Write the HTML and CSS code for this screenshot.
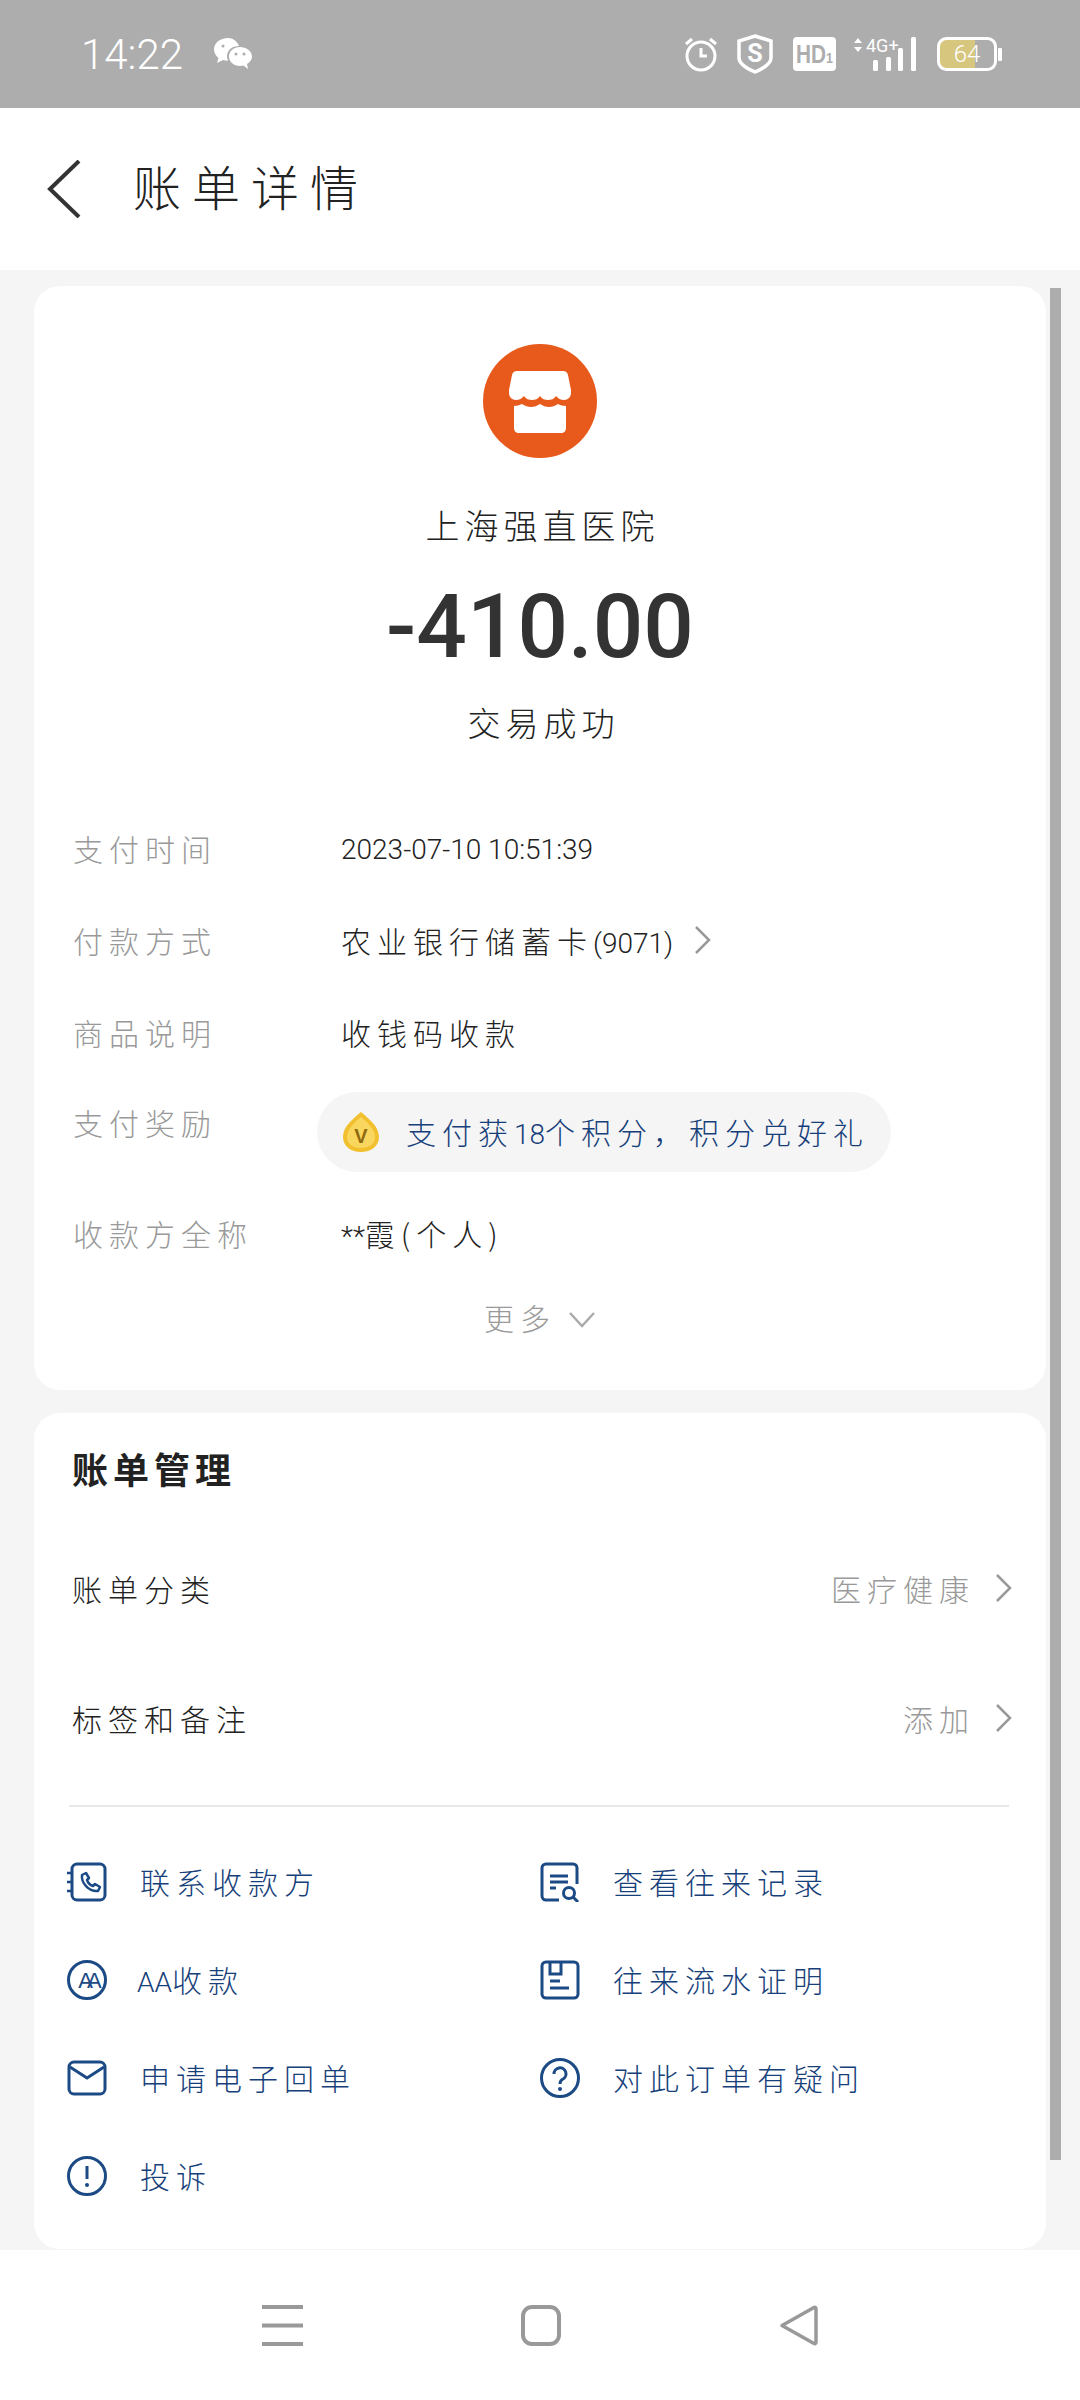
FILE: index.html
```html
<!DOCTYPE html>
<html lang="zh-CN">
<head>
  <meta charset="UTF-8">
  <title>账单详情</title>
  <link rel="stylesheet" href="styles.css">
</head>
<body>

  <!-- 状态栏 -->
  <div class="status-bar">
    <span class="time">14:22</span>
    <svg class="ic-wechat" viewBox="0 0 38 32">
      <path d="M14 0C6 0 0 5 0 11.500c0 3.500 2 6.500 4.500 8.500L3 25l6-3c1.500.5 3 .7 5 .7-.5-1.500-1-3-1-4.200 0-6.500 5.500-10.500 12-10.500C23 3 19 0 14 0z" fill="#fff"/>
      <path d="M26 9c-6 0-11 4-11 9.500S20 28 26 28c1.300 0 2.500-.2 3.500-.5L34 31l-1-5c3-1.800 5-4.500 5-7.500C38 13 32 9 26 9z" fill="#fff"/>
      <circle cx="22" cy="16" r="1.500" fill="#adadad"/><circle cx="30" cy="16" r="1.500" fill="#adadad"/>
      <circle cx="9" cy="8" r="1.500" fill="#adadad"/>
    </svg>
    <div class="status-icons">
      <svg class="ic-alarm" viewBox="0 0 32 36">
        <circle cx="16" cy="20" r="14" fill="none" stroke="#fff" stroke-width="3"/>
        <path d="M16 12v8h6" fill="none" stroke="#fff" stroke-width="3"/>
        <path d="M1 8l6-5M31 8l-6-5" fill="none" stroke="#fff" stroke-width="3"/>
      </svg>
      <svg class="ic-shield" viewBox="0 0 36 40">
        <path d="M18 2l16 5v17c0 6-9 11-16 14C11 35 2 30 2 24V7z" fill="none" stroke="#fff" stroke-width="3.500"/>
        <text x="18" y="28" class="svg-s">S</text>
      </svg>
      <svg class="ic-hd" viewBox="0 0 43 34">
        <rect width="43" height="34" rx="4" fill="#fff"/>
        <text x="3" y="26" class="svg-hd" textLength="37" lengthAdjust="spacingAndGlyphs">HD<tspan class="svg-hd-sub">1</tspan></text>
      </svg>
      <svg class="ic-net" viewBox="0 -4 63 42">
        <path d="M5 1l4 5H1zM5 15l4-5H1z" fill="#fff"/>
        <text x="13" y="15" class="svg-4g">4G+</text>
        <rect x="20" y="23" width="5" height="11" rx="1.500" fill="#fff"/>
        <rect x="33" y="20" width="5" height="14" rx="1.500" fill="#fff"/>
        <rect x="45" y="11" width="5" height="23" rx="1.500" fill="#fff"/>
        <rect x="58" y="0" width="5" height="34" rx="1.500" fill="#fff"/>
      </svg>
      <svg class="ic-battery" viewBox="0 0 65 34">
        <rect x="3" y="3" width="35" height="28" fill="#d6c67e"/>
        <rect x="1.500" y="1.500" width="57" height="31" rx="8" fill="none" stroke="#fff" stroke-width="3"/>
        <rect x="61" y="11" width="4" height="13" rx="1" fill="#fff"/>
        <text x="30" y="25" class="svg-batt">64</text>
      </svg>
    </div>
  </div>

  <!-- 标题 -->
  <div class="top-bar">
    <svg class="ic-back" viewBox="0 0 34 58"><path d="M32 1L3 29l29 28" fill="none" stroke="#333" stroke-width="4"/></svg>
    <span class="page-title">账单详情</span>
  </div>

  <div class="content">
    <div class="scroll-thumb"></div>

    <!-- 账单信息 -->
    <div class="card info-card">
      <svg class="shop-logo" viewBox="0 0 114 114">
        <circle cx="57" cy="57" r="57" fill="#e8591c"/>
        <path d="M34 27h46c3 0 4 1 5 4l3 15v3c0 4-3 7-7 7-3 0-5-1-8-4-2 3-5 4-8 4s-6-1-8-4c-2 3-5 4-8 4s-6-1-8-4c-3 3-5 4-8 4-4 0-7-3-7-7v-3l3-15c1-3 2-4 5-4z" fill="#fff"/>
        <path d="M31 62c3 0 5-1 8-2 3 2 6 3 9 3s6-1 9-3c3 2 6 3 9 3s6-1 9-3c2 1 5 2 8 2v22c0 3-2 5-5 5H36c-3 0-5-2-5-5z" fill="#fff"/>
      </svg>
      <div class="shop-name">上海强直医院</div>
      <div class="amount">-410.00</div>
      <div class="pay-status">交易成功</div>

      <div class="info-row first">
        <span class="label">支付时间</span>
        <span class="value num">2023-07-10 10:51:39</span>
      </div>
      <div class="info-row">
        <span class="label">付款方式</span>
        <span class="value">农业银行储蓄卡<span class="tight">(9071)</span></span>
        <svg class="chev-sm" viewBox="0 0 18 30"><path d="M2 2l13 13L2 28" fill="none" stroke="#999" stroke-width="2.500"/></svg>
      </div>
      <div class="info-row">
        <span class="label">商品说明</span>
        <span class="value">收钱码收款</span>
      </div>
      <div class="info-row reward-row">
        <span class="label">支付奖励</span>
        <div class="reward-pill">
          <svg class="coin" viewBox="0 0 36 40">
            <path d="M18 0C25 6 36 14 36 25c0 9-8 15-18 15S0 34 0 25C0 14 11 6 18 0z" fill="#f2c02e"/>
            <path d="M18 5C24 10 32 17 32 25c0 7-6 11-14 11S4 32 4 25C4 17 12 10 18 5z" fill="#f9d75e"/>
            <text x="18" y="31" class="svg-v">V</text>
          </svg>
          <span class="reward-text">支付获<span class="tight">18</span>个积分，积分兑好礼</span>
        </div>
      </div>
      <div class="info-row payee-row">
        <span class="label">收款方全称</span>
        <span class="value"><span class="tight">**</span>霞(个人)</span>
      </div>
      <div class="more">
        <span>更多</span>
        <svg class="chev-down" viewBox="0 0 28 18"><path d="M2 2l12 13L26 2" fill="none" stroke="#aaa" stroke-width="2.500"/></svg>
      </div>
    </div>

    <!-- 账单管理 -->
    <div class="card manage-card">
      <div class="card-title">账单管理</div>
      <div class="manage-row">
        <span class="manage-name">账单分类</span>
        <span class="manage-value">医疗健康</span>
        <svg class="chev" viewBox="0 0 18 30"><path d="M2 2l13 13L2 28" fill="none" stroke="#999" stroke-width="2.500"/></svg>
      </div>
      <div class="manage-row">
        <span class="manage-name">标签和备注</span>
        <span class="manage-value">添加</span>
        <svg class="chev" viewBox="0 0 18 30"><path d="M2 2l13 13L2 28" fill="none" stroke="#999" stroke-width="2.500"/></svg>
      </div>
      <div class="divider"></div>

      <div class="actions">
        <div class="action">
          <svg class="action-icon" viewBox="0 0 40 40">
            <rect x="5" y="2" width="33" height="36" rx="5" fill="none" stroke="#1c4a85" stroke-width="3"/>
            <path d="M0 11h5M0 20h5M0 29h5" stroke="#1c4a85" stroke-width="2.500"/>
            <path d="M15 13l4-2 3 5-2 2c1 3 3 5 6 6l2-2 5 3-2 4c-9 1-17-8-16-16z" fill="none" stroke="#1c4a85" stroke-width="2.500" stroke-linejoin="round"/>
          </svg>
          <span>联系收款方</span>
        </div>
        <div class="action">
          <svg class="action-icon" viewBox="0 0 40 40">
            <path d="M37 22V6a4 4 0 0 0-4-4H6a4 4 0 0 0-4 4v28a4 4 0 0 0 4 4h13" fill="none" stroke="#1c4a85" stroke-width="3"/>
            <path d="M10 14h18M10 20h18M10 26h6" stroke="#1c4a85" stroke-width="3"/>
            <circle cx="29" cy="31" r="5.500" fill="none" stroke="#1c4a85" stroke-width="3"/>
            <path d="M33 35l5 5" stroke="#1c4a85" stroke-width="3"/>
          </svg>
          <span>查看往来记录</span>
        </div>
        <div class="action">
          <svg class="action-icon" viewBox="0 0 40 40">
            <circle cx="20" cy="20" r="18.500" fill="none" stroke="#1c4a85" stroke-width="3"/>
            <text x="20" y="28" class="svg-aa">AA</text>
          </svg>
          <span class="aa-text"><span class="tight">AA</span>收款</span>
        </div>
        <div class="action">
          <svg class="action-icon" viewBox="0 0 40 40">
            <rect x="2" y="2" width="36" height="36" rx="4" fill="none" stroke="#1c4a85" stroke-width="3"/>
            <path d="M10 2v12h11V2" fill="none" stroke="#1c4a85" stroke-width="3"/>
            <path d="M10 21h10M10 28h19" stroke="#1c4a85" stroke-width="3"/>
          </svg>
          <span>往来流水证明</span>
        </div>
        <div class="action">
          <svg class="action-icon mail" viewBox="0 0 40 36">
            <rect x="2" y="2" width="36" height="32" rx="5" fill="none" stroke="#1c4a85" stroke-width="3"/>
            <path d="M3 7l17 11L37 7" fill="none" stroke="#1c4a85" stroke-width="3"/>
          </svg>
          <span>申请电子回单</span>
        </div>
        <div class="action">
          <svg class="action-icon" viewBox="0 0 40 40">
            <circle cx="20" cy="20" r="18.500" fill="none" stroke="#1c4a85" stroke-width="3"/>
            <path d="M14 16a6 6 0 1 1 9 5c-2 1-3 2-3 5" fill="none" stroke="#1c4a85" stroke-width="3"/>
            <circle cx="20" cy="31" r="2" fill="#1c4a85"/>
          </svg>
          <span>对此订单有疑问</span>
        </div>
        <div class="action">
          <svg class="action-icon" viewBox="0 0 40 40">
            <circle cx="20" cy="20" r="18.500" fill="none" stroke="#1c4a85" stroke-width="3"/>
            <path d="M20 10v13" stroke="#1c4a85" stroke-width="3"/>
            <circle cx="20" cy="29" r="2" fill="#1c4a85"/>
          </svg>
          <span>投诉</span>
        </div>
      </div>
    </div>
  </div>

  <!-- 底部导航 -->
  <div class="nav-bar">
    <svg class="nav-menu" viewBox="0 0 41 41"><path d="M0 2h41M0 20.500h41M0 39h41" stroke="#999" stroke-width="4"/></svg>
    <svg class="nav-home" viewBox="0 0 40 41"><rect x="2" y="2" width="36" height="37" rx="9" fill="none" stroke="#999" stroke-width="4"/></svg>
    <svg class="nav-back" viewBox="0 0 39 41"><path d="M3 20.500L35 2.500c1-.5 2 0 2 1.500v33c0 1.500-1 2-2 1.500z" fill="none" stroke="#999" stroke-width="3.500" stroke-linejoin="round"/></svg>
  </div>

</body>
</html>
```

FILE: styles.css
```css
* {
  box-sizing: border-box;
}

body {
  margin: 0;
  width: 1080px;
  height: 2400px;
  overflow: hidden;
  background-color: #f5f5f5;
  color: #222;
  font-family: "Noto Sans CJK SC", "Noto Sans", sans-serif;
  font-weight: 300;
  font-size: 30px;
  letter-spacing: 6px;
}

svg {
  display: block;
  flex-shrink: 0;
}

/* 状态栏 */
.status-bar {
  height: 108px;
  background-color: #adadad;
  display: flex;
  align-items: center;
  padding: 0 78px 0 81px;
}

.time {
  font-family: Roboto, sans-serif;
  font-weight: 300;
  font-size: 42px;
  letter-spacing: 0;
  color: #fff;
}

.ic-wechat {
  width: 38px;
  height: 32px;
  margin-left: 31px;
}

.status-icons {
  margin-left: auto;
  display: flex;
  align-items: center;
  gap: 20px;
}

.ic-alarm { width: 32px; height: 36px; }
.ic-shield { width: 36px; height: 40px; }
.ic-hd { width: 43px; height: 34px; }
.ic-net { width: 63px; height: 42px; margin-left: -3px; }
.ic-battery { width: 65px; height: 34px; margin-left: 1px; }

.svg-s {
  font: 700 25px Roboto, sans-serif;
  fill: #fff;
  text-anchor: middle;
  letter-spacing: 0;
}

.svg-hd {
  font: 700 25px "Liberation Sans", sans-serif;
  fill: #adadad;
  letter-spacing: 0;
}

.svg-hd-sub {
  font-size: 15px;
}

.svg-4g {
  font: 400 18px Roboto, sans-serif;
  fill: #fff;
  letter-spacing: 0;
}

.svg-batt {
  font: 300 24px Roboto, sans-serif;
  fill: #fff;
  text-anchor: middle;
  letter-spacing: 0;
}

.svg-v {
  font: 700 20px "Liberation Sans", sans-serif;
  fill: #8f6a10;
  text-anchor: middle;
  letter-spacing: 0;
}

.svg-aa {
  font: 400 22px "Liberation Sans", sans-serif;
  fill: #1c4a85;
  text-anchor: middle;
  letter-spacing: -6px;
}

/* 标题 */
.top-bar {
  height: 162px;
  background-color: #fff;
  display: flex;
  align-items: center;
  padding-left: 47px;
}

.ic-back {
  width: 34px;
  height: 58px;
}

.page-title {
  margin-left: 52px;
  margin-bottom: 8px;
  font-size: 48px;
  letter-spacing: 11px;
}

/* 内容 */
.content {
  position: relative;
  height: 1980px;
  padding: 16px 34px 0;
}

.scroll-thumb {
  position: absolute;
  top: 18px;
  right: 19px;
  width: 11px;
  height: 1872px;
  background-color: #adadad;
}

.card {
  background-color: #fff;
  border-radius: 26px;
}

.info-card {
  height: 1104px;
  padding: 58px 38px 0;
  display: flex;
  flex-direction: column;
}

.shop-logo {
  width: 114px;
  height: 114px;
  align-self: center;
}

.shop-name {
  margin-top: 37px;
  padding-left: 5px;
  line-height: 60px;
  font-size: 34px;
  letter-spacing: 5px;
  text-align: center;
}

.amount {
  margin-top: 22px;
  line-height: 100px;
  font-family: Roboto, sans-serif;
  font-weight: 500;
  font-size: 89px;
  letter-spacing: 0;
  color: #333;
  text-align: center;
}

.pay-status {
  margin-top: 20px;
  padding-left: 7px;
  line-height: 50px;
  font-size: 33px;
  letter-spacing: 5px;
  text-align: center;
}

.info-row {
  display: flex;
  align-items: center;
  height: 92px;
  padding-bottom: 3px;
}

.info-row.first {
  margin-top: 56px;
}

.label {
  width: 269px;
  flex-shrink: 0;
  padding-left: 1px;
  color: #999;
}

.value.num {
  margin-top: 3px;
  font-family: Roboto, sans-serif;
  font-weight: 300;
  font-size: 28px;
  letter-spacing: 0;
}

.tight {
  font-family: Roboto, sans-serif;
  font-size: 28px;
  letter-spacing: 0;
}

.chev-sm {
  width: 18px;
  height: 30px;
  margin-left: 21px;
}

.reward-row {
  height: 80px;
  margin-top: 13px;
  padding-bottom: 0;
  align-items: flex-start;
}

.reward-row .label {
  width: 245px;
  line-height: 60px;
}

.reward-pill {
  height: 80px;
  width: 574px;
  border-radius: 40px;
  background-color: #f5f5f5;
  display: flex;
  align-items: center;
  padding-left: 26px;
  color: #173f7a;
}

.coin {
  width: 36px;
  height: 40px;
}

.reward-text {
  margin-left: 27px;
  margin-bottom: 3px;
  white-space: nowrap;
}

.payee-row {
  margin-top: 16px;
}

.more {
  margin-top: 12px;
  height: 50px;
  display: flex;
  align-items: center;
  justify-content: center;
  color: #999;
  gap: 12px;
}

.chev-down {
  width: 28px;
  height: 18px;
  margin-top: 6px;
}

/* 账单管理 */
.manage-card {
  height: 836px;
  margin-top: 23px;
  padding: 25px 33px 0 33px;
}

.card-title {
  line-height: 60px;
  padding-left: 5px;
  font-size: 36px;
  font-weight: 700;
  letter-spacing: 5px;
}

.manage-row {
  height: 130px;
  display: flex;
  align-items: center;
  padding-left: 5px;
  padding-bottom: 3px;
}

.card-title + .manage-row {
  margin-top: 26px;
}

.manage-value {
  margin-left: auto;
  color: #999;
}

.chev {
  width: 18px;
  height: 30px;
  margin-left: 20px;
}

.divider {
  height: 2px;
  margin: 21px 4px 0 2px;
  background-color: #e8e8e8;
}

.actions {
  margin-top: 26px;
  display: grid;
  grid-template-columns: 473px 1fr;
  grid-auto-rows: 98px;
}

.action {
  display: flex;
  align-items: center;
  color: #173f7a;
  white-space: nowrap;
}

.action-icon {
  width: 40px;
  height: 40px;
  margin-right: 33px;
}

.action-icon.mail {
  height: 36px;
}

.action span {
  margin-bottom: 3px;
}

.aa-text {
  margin-left: -3px;
}

.aa-text .tight {
  margin-bottom: 0;
}

/* 底部导航 */
.nav-bar {
  height: 150px;
  background-color: #fff;
  display: flex;
  align-items: center;
  gap: 218px;
  padding: 0 0 0 262px;
}

.nav-menu { width: 41px; height: 41px; }
.nav-home { width: 40px; height: 41px; }
.nav-back { width: 39px; height: 41px; }
```
